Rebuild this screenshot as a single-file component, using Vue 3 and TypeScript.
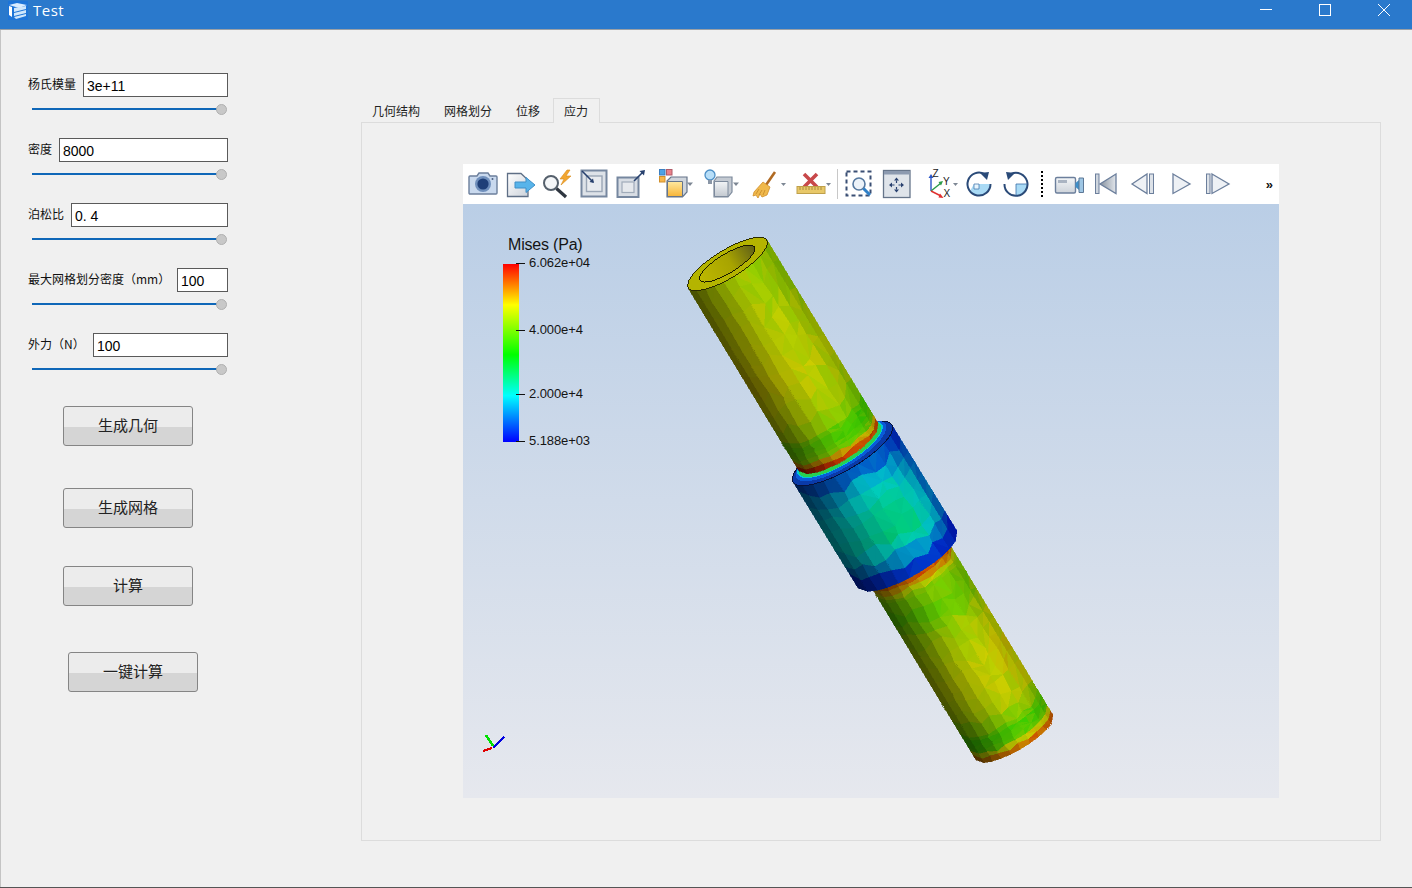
<script setup lang="ts">
type Pt = [number, number]
interface Part {
  a: Pt
  w: Pt
  l: Pt
  bulge: number
  nu: number
  vs: number[]
  noise: number
  t: (u: number, v: number) => number
}
interface Tri {
  id: string
  points: string
  fill: string
}

const fields = [
  { label: '杨氏模量', value: '3e+11', width: 145 },
  { label: '密度', value: '8000', width: 169 },
  { label: '泊松比', value: '0. 4', width: 157 },
  { label: '最大网格划分密度（mm）', value: '100', width: 51 },
  { label: '外力（N）', value: '100', width: 135 },
]
const actions = ['生成几何', '生成网格', '计算', '一键计算']
const tabs = ['几何结构', '网格划分', '位移', '应力']
const ticks = [
  { y: 263, text: '6.062e+04' },
  { y: 330, text: '4.000e+4' },
  { y: 394, text: '2.000e+4' },
  { y: 441, text: '5.188e+03' },
]

function pw(x: number, s: number[][]): number {
  if (x <= s[0][0]) return s[0][1]
  for (let i = 1; i < s.length; i++) {
    if (x <= s[i][0]) {
      const k = (x - s[i - 1][0]) / (s[i][0] - s[i - 1][0])
      return s[i - 1][1] + (s[i][1] - s[i - 1][1]) * k
    }
  }
  return s[s.length - 1][1]
}

const stops: number[][] = [
  [0, 0, 0, 255],
  [0.26, 0, 255, 255],
  [0.49, 0, 255, 0],
  [0.77, 255, 255, 0],
  [1, 255, 0, 0],
]
function colour(t: number, shade: number): string {
  const c = Math.min(1, Math.max(0, t))
  const rgb = [1, 2, 3].map((k) => {
    const m = stops.map((s) => [s[0], s[k]])
    return Math.round(pw(c, m) * shade * 0.8)
  })
  return `rgb(${rgb[0]},${rgb[1]},${rgb[2]})`
}

let seed = 4711
function rnd(): number {
  seed = (seed * 16807) % 2147483647
  return seed / 2147483647
}

function range(from: number, to: number, n: number): number[] {
  return Array.from({ length: n }, (_, i) => from + ((to - from) * i) / n)
}

function mesh(p: Part, key: string): Tri[] {
  const len = Math.hypot(p.l[0], p.l[1])
  const grid: Pt[][] = []
  const us: number[] = []
  for (let i = 0; i <= p.nu; i++) {
    const lin = i / p.nu
    us.push(0.55 * lin + (0.45 * (1 - Math.cos(Math.PI * lin))) / 2)
  }
  for (let j = 0; j < p.vs.length; j++) {
    const row: Pt[] = []
    for (let i = 0; i <= p.nu; i++) {
      const gap = j > 0 && j < p.vs.length - 1 ? Math.min(p.vs[j] - p.vs[j - 1], p.vs[j + 1] - p.vs[j]) : 0
      const du = i > 1 && i < p.nu - 1 ? 0.12 * (us[i + 1] - us[i - 1]) : 0
      const u = us[i] + (rnd() - 0.5) * du
      const v = p.vs[j] + (rnd() - 0.5) * gap * 0.7
      const arc = p.bulge * Math.sqrt(Math.max(0, 1 - (2 * u - 1) ** 2))
      row.push([
        p.a[0] + p.w[0] * u + p.l[0] * v + (p.l[0] / len) * arc,
        p.a[1] + p.w[1] * u + p.l[1] * v + (p.l[1] / len) * arc,
      ])
    }
    grid.push(row)
  }
  const out: Tri[] = []
  for (let j = 0; j < p.vs.length - 1; j++) {
    for (let i = 0; i < p.nu; i++) {
      const q = [grid[j][i], grid[j][i + 1], grid[j + 1][i + 1], grid[j + 1][i]]
      const tris = rnd() > 0.5 ? [[q[0], q[1], q[2]], [q[0], q[2], q[3]]] : [[q[0], q[1], q[3]], [q[1], q[2], q[3]]]
      const um = (us[i] + us[i + 1]) / 2
      const vm = (p.vs[j] + p.vs[j + 1]) / 2
      const shade = 0.38 + 0.62 * Math.pow(Math.sin(Math.PI * um * 0.75), 1.3)
      tris.forEach((tr, n) => {
        const amount = um > 0.45 ? p.noise : p.noise * 0.1
        const t = p.t(um, vm) + (rnd() - 0.5) * amount
        const s = shade * (1 + (um > 0.45 ? (rnd() - 0.5) * 0.03 : 0))
        out.push({
          id: `${key}-${j}-${i}-${n}`,
          points: tr.map((pt) => `${pt[0].toFixed(1)},${pt[1].toFixed(1)}`).join(' '),
          fill: colour(t, s),
        })
      })
    }
  }
  return out
}

const lower = mesh(
  {
    a: [870, 585],
    w: [77, -45],
    l: [106, 175],
    bulge: 13,
    nu: 10,
    vs: [...range(0, 0.1, 4), ...range(0.1, 0.86, 12), ...range(0.86, 1, 6), 1],
    noise: 0.05,
    t: (u, v) =>
      pw(v, [[0, 0.92], [0.03, 0.86], [0.08, 0.68], [0.2, 0.62], [0.35, 0.72], [0.6, 0.76], [0.8, 0.72], [0.9, 0.58], [0.95, 0.62], [0.98, 0.9], [1, 0.84]]) +
      (u - 0.5) * 0.03,
  },
  'l',
)
const collar = mesh(
  {
    a: [793, 482],
    w: [99, -57],
    l: [65, 106],
    bulge: 17,
    nu: 11,
    vs: [...range(0, 1, 9), 1],
    noise: 0.02,
    t: (u, v) =>
      pw(v, [[0, 0.07], [0.08, 0.16], [0.2, 0.26], [0.4, 0.32], [0.65, 0.35], [0.8, 0.24], [0.92, 0.08], [1, 0.04]]) *
      pw(u, [[0, 0.72], [0.2, 0.85], [0.5, 1], [0.72, 1], [0.9, 0.72], [1, 0.35]]),
  },
  'c',
)
const upper = mesh(
  {
    a: [688, 288],
    w: [79, -48],
    l: [111, 183],
    bulge: 14,
    nu: 10,
    vs: [...range(0, 0.84, 10), ...range(0.84, 1, 7), 1],
    noise: 0.045,
    t: (u, v) =>
      pw(v, [[0, 0.72], [0.3, 0.745], [0.55, 0.765], [0.78, 0.72], [0.88, 0.6], [0.94, 0.64], [0.97, 0.86], [1, 0.99]]) -
      (u - 0.4) * 0.05,
  },
  'u',
)
</script>

<template>
  <div class="window">
    <header class="titlebar">
      <svg class="app-icon" viewBox="0 0 20 19">
        <rect width="20" height="19" fill="#1d74d8" />
        <path d="M1 4 L9 2 L19 4 L11 7 Z" fill="#d9ecff" />
        <path d="M1 5 L4 6 V16 L1 14 Z" fill="#fff" />
        <path d="M6 7 L18 5 V8 L6 11 Z M6 12 L18 9 V12 L6 15 Z M6 16 L18 13 V15 L8 18 Z" fill="#cfe6fb" />
      </svg>
      <span class="title">Test</span>
      <div class="win-controls">
        <svg class="win-btn" viewBox="0 0 12 12"><path d="M0 5.5 H12" stroke="#fff" fill="none" /></svg>
        <svg class="win-btn" viewBox="0 0 12 12"><rect x="0.5" y="0.5" width="11" height="11" stroke="#fff" fill="none" /></svg>
        <svg class="win-btn" viewBox="0 0 12 12"><path d="M0 0 L12 12 M12 0 L0 12" stroke="#fff" fill="none" /></svg>
      </div>
    </header>

    <div class="content">
      <aside class="sidebar">
        <div v-for="f in fields" :key="f.label" class="field">
          <div class="field-row">
            <label class="field-label">{{ f.label }}</label>
            <div class="field-input" :style="{ width: f.width + 'px' }">{{ f.value }}</div>
          </div>
          <div class="slider"><span class="track"></span><span class="knob"></span></div>
        </div>
        <button v-for="a in actions" :key="a" class="action" type="button">{{ a }}</button>
      </aside>

      <main class="main">
        <nav class="tabs">
          <span v-for="(t, i) in tabs" :key="t" class="tab" :class="{ active: i === 3 }">{{ t }}</span>
        </nav>
        <section class="pane">
          <div class="viewer">
            <div class="toolbar">
              <!-- camera -->
              <svg class="ic first" width="32" height="32" viewBox="0 0 32 32">
                <path d="M3 8 H10 L12 5 H21 L23 8 H29 a1 1 0 0 1 1 1 V25 a1 1 0 0 1 -1 1 H3 a1 1 0 0 1 -1 -1 V9 a1 1 0 0 1 1 -1 Z" fill="#c9d9ee" stroke="#6c7f9c" stroke-width="1.4" />
                <circle cx="16" cy="16" r="8" fill="#6f8fbc" />
                <circle cx="16" cy="16" r="5.6" fill="#1f3f78" />
                <circle cx="25.5" cy="11" r="1" fill="#4b5f80" />
              </svg>
              <!-- export -->
              <svg class="ic" width="32" height="32" viewBox="0 0 32 32">
                <path d="M3.5 5.5 H17 L24 12 V28.5 H3.5 Z" fill="url(#fileG)" stroke="#5f6f86" stroke-width="1.3" />
                <path d="M11 14 H22 V9.5 L31 17 L22 24.5 V20 H11 Z" fill="#58b4ea" stroke="#3f8fc8" />
              </svg>
              <!-- magnify + bolt -->
              <svg class="ic" width="32" height="32" viewBox="0 0 32 32">
                <circle cx="10" cy="15" r="7" fill="#f4f6f8" stroke="#55606c" stroke-width="2" />
                <path d="M15.5 20.5 L25 29" stroke="#2f3640" stroke-width="3.2" />
                <path d="M26 2 L19 11 H23 L20 17 L30 8 H25 L29 2 Z" fill="#f2a630" stroke="#d98a1a" stroke-width="0.6" />
              </svg>
              <!-- reset box in -->
              <svg class="ic" width="32" height="32" viewBox="0 0 32 32">
                <rect x="3.5" y="2.5" width="25" height="26" fill="#dde2e8" stroke="#76879f" stroke-width="2" />
                <rect x="8.5" y="8" width="15.5" height="15.5" fill="#e8ebef" stroke="#9aa6b6" stroke-width="1.4" />
                <path d="M4 3 L15 14" stroke="#27406e" stroke-width="1.6" />
                <path d="M16 15 L11.5 14 L15 10.5 Z" fill="#27406e" />
              </svg>
              <!-- box out -->
              <svg class="ic" width="32" height="32" viewBox="0 0 32 32">
                <rect x="2.5" y="9.5" width="21" height="19.5" fill="#d8dde4" stroke="#76879f" stroke-width="2" />
                <rect x="7" y="14" width="12" height="10.5" fill="#e6e9ed" stroke="#a0abb9" stroke-width="1.2" />
                <path d="M19 13 L28 4" stroke="#27406e" stroke-width="1.6" />
                <path d="M30 2 L29 7.5 L24.5 3 Z" fill="#27406e" />
              </svg>
              <!-- coloured cube -->
              <svg class="ic m9" width="40" height="32" viewBox="0 0 40 32">
                <rect x="3.5" y="1.5" width="5.5" height="5.5" fill="#4ea3e6" stroke="#3c7fc0" />
                <rect x="10.5" y="1.5" width="5.5" height="5.5" fill="#e8828a" stroke="#b05a68" />
                <rect x="3.5" y="8.5" width="5.5" height="5.5" fill="#f7b64a" stroke="#d08f2c" />
                <path d="M11 13 L15 9 H31 V24 L26.5 29 H11 Z" fill="#cfd5dc" stroke="#66758a" stroke-width="1.2" />
                <path d="M11.5 13.5 H26.5 V28.5 H11.5 Z" fill="url(#goldG)" stroke="#66758a" />
                <path d="M31 14.5 H37 L34 18 Z" fill="#7d8794" />
              </svg>
              <!-- bulb cube -->
              <svg class="ic" width="40" height="32" viewBox="0 0 40 32">
                <circle cx="9" cy="7" r="5" fill="#b7def8" stroke="#4d8fc6" stroke-width="1.3" />
                <rect x="7" y="12" width="4" height="4" fill="#8a96a6" />
                <path d="M13 13 L16 9 H31 V24 L27 29 H13 Z" fill="#c4cad2" stroke="#7d8a9c" stroke-width="1.2" />
                <path d="M13.5 13.5 H27 V28.5 H13.5 Z" fill="url(#grayG)" stroke="#7d8a9c" />
                <path d="M32 14.5 H38 L35 18 Z" fill="#7d8794" />
              </svg>
              <!-- broom -->
              <svg class="ic" width="40" height="32" viewBox="0 0 40 32">
                <path d="M29 4 L20 17" stroke="#b06a22" stroke-width="2.6" />
                <path d="M17 14 L24 19 L21 27 L16 29 L14 26 L12 30 L10 27 L7 28 L8 24 Z" fill="#f0b94c" stroke="#d08f2c" stroke-width="0.8" />
                <path d="M13 21 L10 26 M16 22 L13 27 M19 22 L17 27" stroke="#c4882a" stroke-width="0.8" />
                <path d="M35 15 H40 L37.5 18 Z" fill="#7d8794" />
              </svg>
              <!-- ruler x -->
              <svg class="ic" width="40" height="32" viewBox="0 0 40 32">
                <path d="M13 6 L26 19 M26 6 L13 19" stroke="#c8484a" stroke-width="3.6" />
                <rect x="6" y="18.5" width="28" height="7" fill="#e8c868" stroke="#bfa04a" />
                <path d="M9 19 V22 M12 19 V22 M15 19 V22 M18 19 V22 M21 19 V22 M24 19 V22 M27 19 V22 M30 19 V22" stroke="#9b7f35" stroke-width="0.8" />
                <path d="M35 15 H40 L37.5 18 Z" fill="#7d8794" />
              </svg>
              <span class="sep"></span>
              <!-- zoom to box -->
              <svg class="ic m4" width="32" height="32" viewBox="0 0 32 32">
                <rect x="4.5" y="3.5" width="24" height="24" fill="none" stroke="#3a4f74" stroke-width="2" stroke-dasharray="4 3" />
                <circle cx="17" cy="16" r="6" fill="#edf3f9" stroke="#55789f" stroke-width="1.6" />
                <path d="M21.5 20.5 L28 27" stroke="#2f80c8" stroke-width="3" />
              </svg>
              <!-- move -->
              <svg class="ic m6" width="32" height="32" viewBox="0 0 32 32">
                <rect x="3.5" y="2.5" width="26.5" height="27" fill="#dfe4ea" stroke="#66758a" stroke-width="1.3" />
                <rect x="4" y="3" width="25.5" height="3.5" fill="#8c9ab0" />
                <path d="M16.5 9.5 L19 12.5 H14 Z M16.5 24.5 L19 21.5 H14 Z M9 17 L12 14.5 V19.5 Z M24 17 L21 14.5 V19.5 Z" fill="#2a4270" />
                <path d="M16.5 12.5 V15 M16.5 19 V21.5 M12 17 H14.5 M18.5 17 H21" stroke="#2a4270" stroke-width="1.2" />
              </svg>
              <!-- axes -->
              <svg class="ic m10" width="40" height="32" viewBox="0 0 40 32">
                <path d="M9 23 V9" stroke="#2a55c8" stroke-width="1.4" />
                <path d="M9 6 L6.5 10 H11.5 Z" fill="#2a55c8" />
                <path d="M9 23 L19 15" stroke="#2a9a48" stroke-width="1.4" />
                <path d="M21 13 L16.5 14 L19 17.5 Z" fill="#2a9a48" />
                <path d="M9 23 L19 28" stroke="#e03030" stroke-width="1.4" />
                <path d="M21.5 30 L18 25.5 L16.5 29.5 Z" fill="#e03030" />
                <text class="axis-letter" x="10.5" y="9">Z</text>
                <text class="axis-letter" x="21" y="17">Y</text>
                <text class="axis-letter" x="21.5" y="29">X</text>
                <path d="M31 15 H36 L33.5 18 Z" fill="#7d8794" />
              </svg>
              <!-- rotate cw -->
              <svg class="ic m1" width="32" height="32" viewBox="0 0 32 32">
                <path d="M16 16 H27.5 A11.5 11.5 0 0 1 7 23 L11 16 Z" fill="#a9daf5" />
                <path d="M11 16 H16 V21 H11 Z" fill="#e6f5fd" stroke="#3a6ea8" stroke-width="0.7" />
                <path d="M21.5 6 A11.5 11.5 0 1 0 27.5 16" fill="none" stroke="#2a4a78" stroke-width="2" />
                <path d="M26 4 L17 5 L24 12 Z" fill="#2a4a78" />
              </svg>
              <!-- rotate ccw -->
              <svg class="ic" width="32" height="32" viewBox="0 0 32 32">
                <path d="M16 16 H27.5 A11.5 11.5 0 0 1 16 27.5 Z" fill="#a9daf5" />
                <path d="M11 6 A11.5 11.5 0 1 1 4.5 16" fill="none" stroke="#2a4a78" stroke-width="2" />
                <path d="M6 4 L15 5 L8 12 Z" fill="#2a4a78" />
                <path d="M16 16 H27.5 M16 16 V27.5" stroke="#3a6ea8" stroke-width="0.8" />
              </svg>
              <span class="dots"></span>
              <!-- camera path -->
              <svg class="ic m10" width="32" height="32" viewBox="0 0 32 32">
                <rect x="2.5" y="9.5" width="20" height="15.5" rx="1.5" fill="url(#camG)" stroke="#6c7f9c" stroke-width="1.4" />
                <rect x="5" y="12" width="9" height="3" fill="#aab4c2" />
                <path d="M22.5 15 L26 12 V22 L22.5 19 Z" fill="#3f8fc8" />
                <path d="M26 10 H30.5 V24.5 H26 Z" fill="#9ec6e4" stroke="#5d7896" />
              </svg>
              <!-- first -->
              <svg class="ic" width="32" height="32" viewBox="0 0 32 32">
                <rect x="5.5" y="6" width="3.5" height="19.5" fill="#cfd6de" stroke="#6c7f9c" />
                <path d="M26 6 L10 16 L26 25.5 Z" fill="url(#triG)" stroke="#6c7f9c" stroke-width="1.3" />
              </svg>
              <!-- prev -->
              <svg class="ic" width="32" height="32" viewBox="0 0 32 32">
                <path d="M5 16 L20 6 V25.5 Z" fill="#eef1f5" stroke="#6c7f9c" stroke-width="1.3" />
                <rect x="22.5" y="6" width="4" height="19.5" fill="#dde2e8" stroke="#6c7f9c" />
              </svg>
              <!-- play -->
              <svg class="ic m6" width="32" height="32" viewBox="0 0 32 32">
                <path d="M8 6 L25 16 L8 25.5 Z" fill="#eef1f5" stroke="#6c7f9c" stroke-width="1.3" />
              </svg>
              <!-- next -->
              <svg class="ic m4" width="32" height="32" viewBox="0 0 32 32">
                <rect x="5.5" y="6" width="3.5" height="19.5" fill="#dde2e8" stroke="#6c7f9c" />
                <path d="M11 6 L28 16 L11 25.5 Z" fill="#eef1f5" stroke="#6c7f9c" stroke-width="1.3" />
              </svg>
              <span class="more">»</span>
            </div>

            <div class="canvas">
              <svg class="scene" viewBox="463 204 816 594" width="816" height="594">
                <defs>
                  <linearGradient id="fileG" x1="0" y1="0" x2="1" y2="1">
                    <stop offset="0" stop-color="#fff" />
                    <stop offset="1" stop-color="#ccd2da" />
                  </linearGradient>
                  <linearGradient id="goldG" x1="0" y1="0" x2="0" y2="1">
                    <stop offset="0" stop-color="#ffe9a0" />
                    <stop offset="1" stop-color="#f7b437" />
                  </linearGradient>
                  <linearGradient id="grayG" x1="0" y1="0" x2="0" y2="1">
                    <stop offset="0" stop-color="#f2f4f6" />
                    <stop offset="1" stop-color="#c3c9d0" />
                  </linearGradient>
                  <linearGradient id="camG" x1="0" y1="0" x2="0" y2="1">
                    <stop offset="0" stop-color="#f4f6f8" />
                    <stop offset="1" stop-color="#cdd3da" />
                  </linearGradient>
                  <linearGradient id="triG" x1="0" y1="0" x2="1" y2="0">
                    <stop offset="0" stop-color="#87929f" />
                    <stop offset="1" stop-color="#e2e6eb" />
                  </linearGradient>
                  <linearGradient id="legendG" x1="0" y1="0" x2="0" y2="1">
                    <stop offset="0" stop-color="#ff0000" />
                    <stop offset="0.23" stop-color="#ffff00" />
                    <stop offset="0.51" stop-color="#00ff00" />
                    <stop offset="0.74" stop-color="#00ffff" />
                    <stop offset="1" stop-color="#0000ff" />
                  </linearGradient>
                  <linearGradient id="holeG" x1="0" y1="0" x2="1" y2="0">
                    <stop offset="0" stop-color="#bdb800" />
                    <stop offset="0.55" stop-color="#a8a400" />
                    <stop offset="1" stop-color="#5f5f18" />
                  </linearGradient>
                </defs>

                <text class="legend-title" x="508" y="250">Mises (Pa)</text>
                <rect x="503" y="264" width="16" height="178" fill="url(#legendG)" />
                <g v-for="t in ticks" :key="t.text">
                  <path :d="`M516 ${t.y + 0.5} H525`" stroke="#111" />
                  <text class="legend-label" x="529" :y="t.y + 4">{{ t.text }}</text>
                </g>

                <g class="mesh">
                  <polygon v-for="t in lower" :key="t.id" :points="t.points" :fill="t.fill" :stroke="t.fill" stroke-width="0.6" />
                  <polygon v-for="t in collar" :key="t.id" :points="t.points" :fill="t.fill" :stroke="t.fill" stroke-width="0.6" />
                  <g transform="translate(842.5 453.5) rotate(-30)">
                    <ellipse rx="57" ry="17" fill="#0a3aa8" stroke="#07123c" />
                  </g>
                  <g transform="translate(841 451) rotate(-31)">
                    <ellipse rx="52" ry="16.5" fill="#0a5ad8" />
                  </g>
                  <g transform="translate(840 449.5) rotate(-31)">
                    <ellipse rx="49" ry="15.5" fill="#00c8d8" />
                    <ellipse rx="47.5" ry="14.8" fill="#28d050" />
                  </g>
                  <polygon v-for="t in upper" :key="t.id" :points="t.points" :fill="t.fill" :stroke="t.fill" stroke-width="0.6" />
                  <g transform="translate(727.5 264) rotate(-31.3)">
                    <ellipse rx="46" ry="14" fill="#b4b400" stroke="#2a2a00" />
                    <ellipse rx="32" ry="9.5" cy="-0.5" fill="url(#holeG)" stroke="#1a1a00" />
                  </g>
                </g>

                <g class="mesh">
                  <path d="M493 746 L486 735" stroke="#00e000" stroke-width="2.5" />
                  <path d="M493 748 L504 737" stroke="#0000e0" stroke-width="2" />
                  <path d="M492 748 L483 751" stroke="#e00000" stroke-width="2.5" />
                </g>
              </svg>
            </div>
          </div>
        </section>
      </main>
    </div>
  </div>
</template>

<style>
html,
body {
  margin: 0;
  background: #f0f0f0;
  overflow: hidden;
}
</style>

<style scoped>
.window {
  width: 1412px;
  height: 888px;
  box-sizing: border-box;
  display: flex;
  flex-direction: column;
  background: #f0f0f0;
  border-bottom: 1px solid #555;
  color: #111;
  font-family: "Noto Sans CJK SC", "Liberation Sans", sans-serif;
}
.titlebar {
  height: 29px;
  flex: none;
  display: flex;
  align-items: flex-start;
  background: #2a79cc;
  border-bottom: 1px solid #9aa0a6;
  box-sizing: content-box;
}
.app-icon {
  width: 20px;
  height: 19px;
  margin: 1px 0 0 8px;
}
.title {
  margin-left: 5px;
  font: 15px/20px "Open Sans", sans-serif;
  letter-spacing: 0.5px;
  color: #fff;
}
.win-controls {
  margin-left: auto;
  display: flex;
  gap: 47px;
  padding: 4px 22px 0 0;
}
.win-btn {
  width: 12px;
  height: 12px;
}
.content {
  flex: 1;
  display: flex;
  min-height: 0;
  border-left: 1px solid #c4c4c4;
}
.sidebar {
  width: 227px;
  flex: none;
  box-sizing: border-box;
  padding: 43px 0 0 27px;
  margin-right: 133px;
  display: flex;
  flex-direction: column;
}
.field {
  margin-bottom: 22px;
}
.field:last-of-type {
  margin-bottom: 0;
}
.field-row {
  display: flex;
  align-items: center;
  height: 24px;
}
.field-label {
  flex: 1;
  font-size: 12px;
  line-height: 16px;
  margin-top: -2px;
  white-space: nowrap;
}
.field-input {
  box-sizing: border-box;
  height: 24px;
  border: 1px solid #5a5a5a;
  background: #fff;
  padding-left: 3px;
  font: 14px/25px "Liberation Sans", sans-serif;
  white-space: pre;
  color: #000;
}
.slider {
  position: relative;
  height: 13px;
  margin: 6px 1px 0 4px;
}
.track {
  position: absolute;
  top: 5px;
  left: 0;
  right: 2px;
  height: 2px;
  background: #0f67b8;
}
.knob {
  position: absolute;
  right: 0;
  top: 1px;
  width: 11px;
  height: 11px;
  box-sizing: border-box;
  border: 1px solid #b0b0b0;
  border-radius: 50%;
  background: #c8c8c8;
}
.action {
  width: 130px;
  height: 40px;
  flex: none;
  padding: 0 0 2px;
  margin-left: 35px;
  border: 1px solid #858585;
  border-radius: 3px;
  background: linear-gradient(#ececec 0 52%, #d5d5d5 52% 100%);
  font: 15px/20px "Noto Sans CJK SC", sans-serif;
  color: #222;
}
.action:nth-of-type(1) {
  margin-top: 30px;
}
.action:nth-of-type(2) {
  margin-top: 42px;
}
.action:nth-of-type(3) {
  margin-top: 38px;
}
.action:nth-of-type(4) {
  margin-top: 46px;
  margin-left: 40px;
}
.main {
  width: 1020px;
  flex: none;
  padding-top: 68px;
  display: flex;
  flex-direction: column;
}
.tabs {
  display: flex;
  height: 24px;
  position: relative;
}
.tab {
  box-sizing: border-box;
  height: 25px;
  padding: 0 13px 0 11px;
  font-size: 12px;
  line-height: 26px;
  color: #222;
  white-space: nowrap;
}
.tab.active {
  position: relative;
  z-index: 1;
  padding: 0 11px 0 10px;
  background: #f0f0f0;
  border: 1px solid #dcdcdc;
  border-bottom: none;
  line-height: 24px;
}
.pane {
  box-sizing: border-box;
  height: 719px;
  border: 1px solid #dcdcdc;
  padding: 41px 0 0 101px;
}
.viewer {
  width: 816px;
}
.toolbar {
  height: 40px;
  background: #fff;
  display: flex;
  align-items: center;
}
.ic {
  flex: none;
  margin-left: 5px;
}
.ic.first {
  margin-left: 4px;
}
.ic.m1 {
  margin-left: 1px;
}
.ic.m4 {
  margin-left: 4px;
}
.ic.m6 {
  margin-left: 6px;
}
.ic.m9 {
  margin-left: 9px;
}
.ic.m10 {
  margin-left: 10px;
}
.axis-letter {
  font: 10px "Liberation Sans", sans-serif;
  fill: #222;
}
.sep {
  flex: none;
  width: 1px;
  height: 30px;
  margin-left: 6px;
  background: #c8c8c8;
}
.dots {
  flex: none;
  height: 26px;
  margin-left: 9px;
  border-left: 2px dotted #000;
}
.more {
  margin-left: auto;
  margin-right: 6px;
  font: bold 13px "Liberation Sans", sans-serif;
  color: #111;
}
.canvas {
  height: 594px;
  background: linear-gradient(#bacee6, #e6e8ee);
}
.scene {
  display: block;
}
.legend-title {
  font: 16px "Liberation Sans", sans-serif;
  letter-spacing: -0.2px;
  fill: #141414;
}
.legend-label {
  font: 13px "Liberation Sans", sans-serif;
  letter-spacing: -0.1px;
  fill: #141414;
}
.mesh {
  shape-rendering: crispEdges;
}
</style>
